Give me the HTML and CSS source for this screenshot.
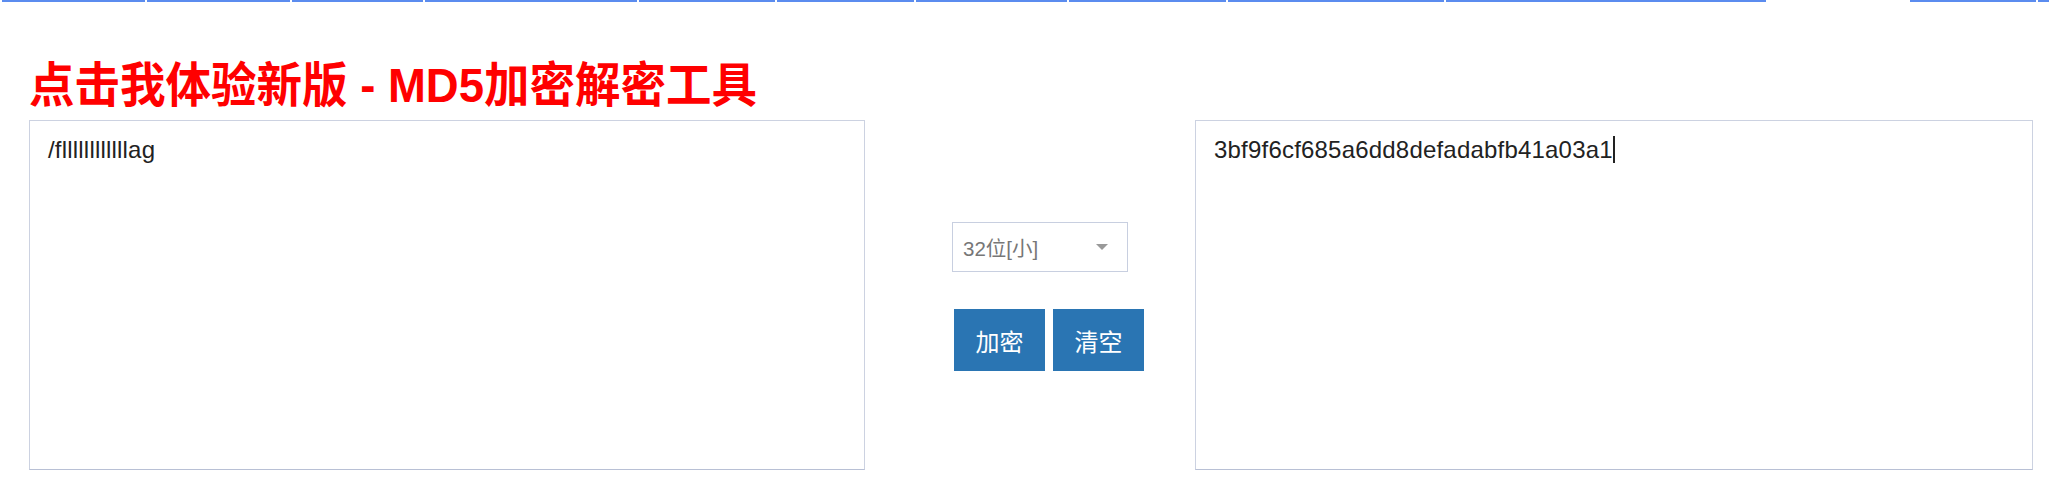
FILE: index.html
```html
<!DOCTYPE html>
<html lang="zh-CN">
<head>
<meta charset="utf-8">
<title>MD5加密解密工具</title>
<link rel="stylesheet" href="styles.css">
</head>
<body>
<div class="topnav">
  <span class="seg s1"></span><span class="seg s2"></span><span class="seg s3"></span><span class="seg s4"></span><span class="seg s5"></span><span class="seg s6"></span><span class="seg s7"></span><span class="seg s8"></span><span class="seg s9"></span><span class="seg s10"></span><span class="seg blank"></span><span class="seg s11"></span><span class="seg s12"></span>
</div>
<h1 class="title">点击我体验新版 - MD5加密解密工具</h1>
<div class="tool">
  <div class="box box-left">/fllllllllllllag</div>
  <div class="mid">
    <div class="select"><span class="select-text">32位[小]</span><i class="select-arrow"></i></div>
    <div class="btns">
      <button class="btn">加密</button>
      <button class="btn">清空</button>
    </div>
  </div>
  <div class="box box-right">3bf9f6cf685a6dd8defadabfb41a03a1<span class="caret"></span></div>
</div>
</body>
</html>
```

FILE: styles.css
```css
html, body {
  margin: 0;
  padding: 0;
  background: #fff;
}
body {
  font-family: "Liberation Sans", "Noto Sans CJK SC", sans-serif;
  color: #333;
}
.topnav {
  display: flex;
  gap: 2px;
  padding-left: 2px;
  height: 2px;
}
.seg {
  display: block;
  height: 2px;
  background: #5b8cef;
  flex: none;
}
.s1 { width: 143px; }
.s2 { width: 143px; }
.s3 { width: 131px; }
.s4 { width: 212px; }
.s5 { width: 136px; }
.s6 { width: 137px; }
.s7 { width: 151px; }
.s8 { width: 157px; }
.s9 { width: 216px; }
.s10 { width: 320px; }
.blank { width: 140px; background: transparent; }
.s11 { width: 126px; }
.s12 { width: 11px; }

.title {
  margin: 58px 0 8px;
  padding-left: 29px;
  font-family: "Liberation Sans", "Noto Sans CJK SC", sans-serif;
  font-weight: bold;
  font-size: 45.5px;
  line-height: 52px;
  color: #ff0000;
  white-space: nowrap;
  transform: scaleY(1.06);
  transform-origin: left center;
}

.tool {
  display: flex;
  padding: 0 16px 0 29px;
  height: 350px;
}
.box {
  box-sizing: border-box;
  height: 350px;
  border: 1px solid #ccd2e1;
  border-bottom-color: #b8c0d5;
  padding: 15px 18px;
  font-size: 24px;
  line-height: 27px;
  letter-spacing: 0.2px;
  color: #222;
  background: #fff;
}
.box-left {
  width: 836px;
  flex: none;
}
.box-right {
  flex: 1;
}
.caret {
  display: inline-block;
  width: 2px;
  height: 27px;
  background: #222;
  vertical-align: top;
}
.mid {
  width: 330px;
  flex: none;
  display: flex;
  flex-direction: column;
  align-items: flex-start;
  padding-left: 87px;
  box-sizing: border-box;
}
.select {
  margin-top: 102px;
  box-sizing: border-box;
  width: 176px;
  height: 50px;
  border: 1px solid #c8cfe0;
  display: flex;
  align-items: center;
  justify-content: space-between;
  padding: 0 19px 0 10px;
}
.select-text {
  font-size: 20.5px;
  color: #777;
}
.select-arrow {
  display: block;
  width: 0;
  height: 0;
  border-left: 6px solid transparent;
  border-right: 6px solid transparent;
  border-top: 6px solid #999;
}
.btns {
  display: flex;
  gap: 8px;
  margin-top: 37px;
  margin-left: 2px;
}
.btn {
  width: 91px;
  height: 62px;
  border: 0;
  padding: 0;
  background: #2a75b3;
  color: #fff;
  font-family: "Noto Sans CJK SC", sans-serif;
  font-size: 24px;
  cursor: pointer;
}
```
